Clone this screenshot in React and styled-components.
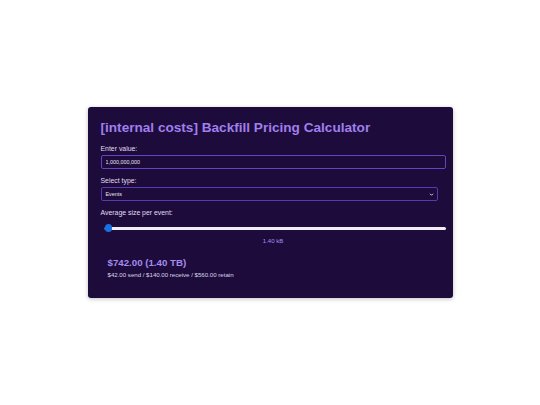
import React, { useState } from "react";
import styled, { createGlobalStyle } from "styled-components";

const GlobalStyle = createGlobalStyle`
  html, body {
    margin: 0;
    padding: 0;
    background: #ffffff;
    font-family: "Liberation Sans", Arial, sans-serif;
  }
`;

const Page = styled.div`
  width: 540px;
  height: 405px;
  display: flex;
  align-items: flex-start;
  justify-content: center;
  padding-top: 107px;
  box-sizing: border-box;
`;

const Card = styled.div`
  box-sizing: border-box;
  width: 365px;
  padding: 12px 7px 20px 13px;
  background: #1d0b3c;
  border-radius: 3px;
  box-shadow: 0 1px 4px rgba(0, 0, 0, 0.25);
  display: flex;
  flex-direction: column;
`;

const Title = styled.h1`
  margin: 0 0 6.5px;
  font-size: 13.6px;
  font-weight: bold;
  color: #a07fec;
  line-height: 18px;
`;

const Label = styled.label`
  display: block;
  font-size: 6.9px;
  color: #e2dcef;
  margin-bottom: 2.5px;
  line-height: 9px;
`;

const Field = styled.div`
  margin-bottom: ${(p) => (p.$gap === undefined ? 6.5 : p.$gap)}px;
`;

const TextInput = styled.input`
  box-sizing: border-box;
  display: block;
  width: 100%;
  height: 14px;
  padding: 0 4px;
  background: #1d0b3c;
  border: 1px solid #6743c2;
  border-radius: 2px;
  color: #e8e4f2;
  font-family: "Liberation Sans", Arial, sans-serif;
  font-size: 5.4px;
  outline: none;
`;

const SelectBox = styled.div`
  box-sizing: border-box;
  width: calc(100% - 8px);
  height: 14px;
  padding: 0 3px 0 4px;
  display: flex;
  align-items: center;
  justify-content: space-between;
  background: #1d0b3c;
  border: 1px solid #5a38b0;
  border-radius: 2px;
  color: #e8e4f2;
  font-size: 5.4px;
`;

const Chevron = styled.svg`
  width: 5px;
  height: 5px;
`;

const Range = styled.input`
  -webkit-appearance: none;
  appearance: none;
  display: block;
  width: calc(100% - 3px);
  height: 3px;
  margin: 10px 0 0 3px;
  border-radius: 2px;
  background: linear-gradient(to right, #1b6fe0 0 1%, #efeef2 1% 100%);
  outline: none;

  &::-webkit-slider-thumb {
    -webkit-appearance: none;
    width: 7.5px;
    height: 7.5px;
    border-radius: 50%;
    background: #1b6fe0;
    border: none;
  }
`;

const SizeValue = styled.div`
  margin-top: 7.5px;
  text-align: center;
  font-size: 6px;
  line-height: 8px;
  color: #a98ff0;
`;

const Result = styled.div`
  padding: 13px 7px 0;
`;

const Total = styled.div`
  font-size: 9.7px;
  line-height: 10px;
  font-weight: bold;
  color: #a48bee;
  margin-bottom: 2.5px;
`;

const Breakdown = styled.div`
  font-size: 6.1px;
  line-height: 7px;
  color: #dcd6ea;
`;

export default function App() {
  const [value, setValue] = useState("1,000,000,000");
  const [size, setSize] = useState(1.4);

  return (
    <Page>
      <GlobalStyle />
      <Card>
        <Title>[internal costs] Backfill Pricing Calculator</Title>
        <Field>
          <Label>Enter value:</Label>
          <TextInput value={value} onChange={(e) => setValue(e.target.value)} />
        </Field>
        <Field>
          <Label>Select type:</Label>
          <SelectBox>
            <span>Events</span>
            <Chevron viewBox="0 0 10 10">
              <path d="M2 3.5 L5 6.5 L8 3.5" fill="none" stroke="#e8e4f2" strokeWidth="1.8" />
            </Chevron>
          </SelectBox>
        </Field>
        <Field $gap={0}>
          <Label>Average size per event:</Label>
          <Range
            type="range"
            min="1"
            max="100"
            step="0.01"
            value={size}
            onChange={(e) => setSize(Number(e.target.value))}
          />
          <SizeValue>{size.toFixed(2)} kB</SizeValue>
        </Field>
        <Result>
          <Total>$742.00 (1.40 TB)</Total>
          <Breakdown>$42.00 send / $140.00 receive / $560.00 retain</Breakdown>
        </Result>
      </Card>
    </Page>
  );
}
